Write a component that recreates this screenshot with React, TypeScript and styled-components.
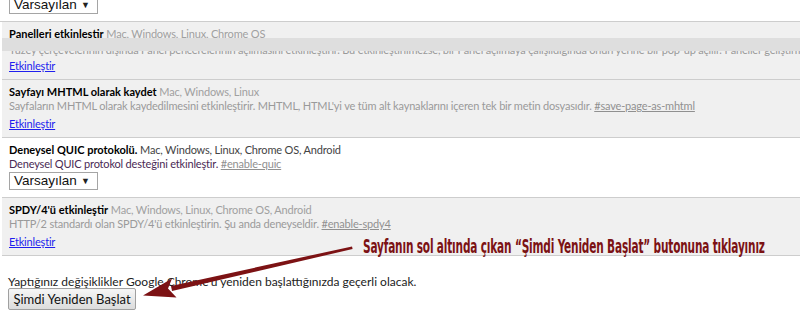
import React from "react";
import styled, { createGlobalStyle } from "styled-components";

const Global = createGlobalStyle`
  html, body { margin: 0; padding: 0; background: #fff; }
  body { font-family: Lato, "Noto Sans", sans-serif; font-size: 12px; color: #000; overflow: hidden; }
  * { box-sizing: border-box; }
`;

const Page = styled.div`
  position: relative;
  width: 800px;
  height: 322px;
  overflow: hidden;
`;

const Experiment = styled.div<{ $grey?: boolean; $tall?: boolean }>`
  position: relative;
  margin-left: 2px;
  padding: 5px 7px 0 7px;
  height: ${(p) => (p.$tall ? "60px" : "58px")};
  background: ${(p) => (p.$grey ? "#f0f0f0" : "#fff")};
  border-bottom: 1px solid #cdcdcd;
  color: ${(p) => (p.$grey ? "#9a9a9a" : "#333")};
  font-size: 11px;
  letter-spacing: -0.18px;
  line-height: 14px;
  white-space: nowrap;
  overflow: hidden;
`;

const TopSlot = styled.div`
  padding: 0 7px 7px 9px;
  margin-top: -4px;
  border-bottom: 1px solid #cdcdcd;
`;

const Line = styled.div`
  height: 14px;
`;

const Title = styled.span`
  font-weight: bold;
  letter-spacing: 0;
  color: #000;
`;

const Platforms = styled.span<{ $grey?: boolean }>`
  color: ${(p) => (p.$grey ? "#a0a0a0" : "#444")};
`;

const Desc = styled.div<{ $grey?: boolean; $shift?: number }>`
  position: relative;
  top: ${(p) => p.$shift ?? 0}px;
  height: 14px;
  color: ${(p) => (p.$grey ? "#9a9a9a" : "#4a2a55")};
`;

const Anchor = styled.a`
  color: #909090;
  text-decoration: underline;
`;

const Enable = styled.a`
  display: block;
  width: fit-content;
  height: 14px;
  margin-top: 4px;
  color: #1f1fee;
  text-decoration: underline;
`;

const Select = styled.div<{ $gap?: number }>`
  display: flex;
  width: 89px;
  align-items: center;
  justify-content: space-between;
  height: 18px;
  margin-top: ${(p) => p.$gap ?? 0}px;
  padding: 0 7px 0 4px;
  border: 1px solid #a5a5a5;
  background: #fff;
  font-family: "Liberation Sans", Arial, sans-serif;
  font-size: 13.5px;
  letter-spacing: 0;
  line-height: 16px;
  color: #111;
`;

const Caret = styled.span`
  font-size: 9px;
  color: #222;
`;

const Band = styled.div`
  position: absolute;
  z-index: 2;
  left: -2px;
  right: 0;
  top: 16px;
  height: 13px;
  background: #dedede;
`;

const Footer = styled.div`
  padding: 19px 8px 0 8px;
  line-height: 14px;
  color: #222;
`;

const Restart = styled.button`
  display: block;
  margin-top: -1px;
  width: 128px;
  height: 22px;
  padding: 0;
  border: 1px solid #a0a0a0;
  border-radius: 2px;
  background: linear-gradient(#f6f6f6, #dcdcdc);
  font-family: Lato, "Noto Sans", sans-serif;
  font-size: 13px;
  color: #111;
`;

const Note = styled.div`
  position: absolute;
  left: 363px;
  top: 234px;
  font-family: "DejaVu Sans Condensed", "DejaVu Sans", sans-serif;
  font-stretch: condensed;
  font-weight: bold;
  font-size: 20px;
  line-height: 24px;
  color: #7c1214;
  white-space: nowrap;
  transform-origin: left center;
  transform: scaleX(0.587);
  letter-spacing: -0.3px;
`;

const ArrowSvg = styled.svg`
  position: absolute;
  left: 0;
  top: 0;
  pointer-events: none;
`;

export default function App() {
  return (
    <Page>
      <Global />
      <TopSlot>
        <Select>
          Varsayılan <Caret>▼</Caret>
        </Select>
      </TopSlot>

      <Experiment $grey>
        <Line>
          <Title>Panelleri etkinleştir</Title>
          <Platforms $grey> Mac, Windows, Linux, Chrome OS</Platforms>
        </Line>
        <Desc $grey $shift={2}>
          Yüzey çerçevelerinin dışında Panel pencerelerinin açılmasını etkinleştirir. Bu etkinleştirilmezse, bir Panel açılmaya çalışıldığında onun yerine bir pop-up açılır. Paneller geliştirme aşamasındadır.
        </Desc>
        <Enable href="#">Etkinleştir</Enable>
        <Band />
      </Experiment>

      <Experiment $grey>
        <Line>
          <Title>Sayfayı MHTML olarak kaydet</Title>
          <Platforms $grey> Mac, Windows, Linux</Platforms>
        </Line>
        <Desc $grey>
          Sayfaların MHTML olarak kaydedilmesini etkinleştirir. MHTML, HTML'yi ve tüm alt kaynaklarını içeren tek bir metin dosyasıdır.{" "}
          <Anchor href="#">#save-page-as-mhtml</Anchor>
        </Desc>
        <Enable href="#">Etkinleştir</Enable>
      </Experiment>

      <Experiment $tall>
        <Line>
          <Title>Deneysel QUIC protokolü.</Title>
          <Platforms> Mac, Windows, Linux, Chrome OS, Android</Platforms>
        </Line>
        <Desc>
          Deneysel QUIC protokol desteğini etkinleştir. <Anchor href="#">#enable-quic</Anchor>
        </Desc>
        <Select $gap={1}>
          Varsayılan <Caret>▼</Caret>
        </Select>
      </Experiment>

      <Experiment $grey>
        <Line>
          <Title>SPDY/4'ü etkinleştir</Title>
          <Platforms $grey> Mac, Windows, Linux, Chrome OS, Android</Platforms>
        </Line>
        <Desc $grey>
          HTTP/2 standardı olan SPDY/4'ü etkinleştirin. Şu anda deneyseldir. <Anchor href="#">#enable-spdy4</Anchor>
        </Desc>
        <Enable href="#">Etkinleştir</Enable>
      </Experiment>

      <Footer>
        <div>Yaptığınız değişiklikler Google Chrome'u yeniden başlattığınızda geçerli olacak.</div>
        <Restart>Şimdi Yeniden Başlat</Restart>
      </Footer>

      <Note>Sayfanın sol altında çıkan “Şimdi Yeniden Başlat” butonuna tıklayınız</Note>

      <ArrowSvg width="800" height="322" viewBox="0 0 800 322">
        <polygon points="352,246.4 352.6,249 172,291 171,286" fill="#7c1214" />
        <polygon points="143,295.5 172,278.5 168,288.5 176.5,297.5" fill="#7c1214" />
      </ArrowSvg>
    </Page>
  );
}
